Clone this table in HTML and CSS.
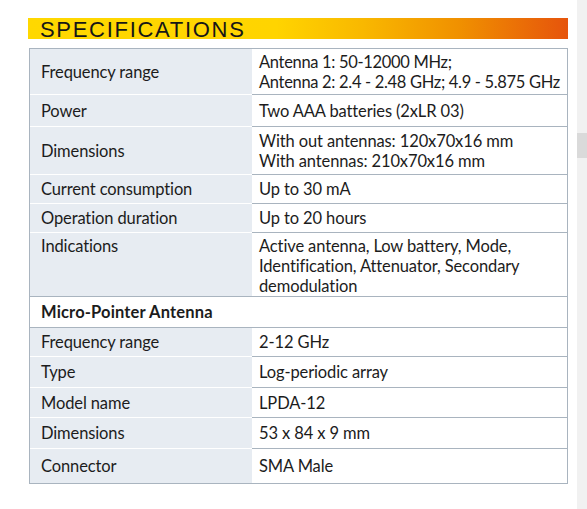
FILE: index.html
```html
<!DOCTYPE html>
<html lang="en">
<head>
<meta charset="utf-8">
<title>Specifications</title>
<link rel="stylesheet" href="styles.css">
</head>
<body>
<div class="page">
  <h1 class="banner">SPECIFICATIONS</h1>
  <div class="spec">
    <div class="row h46">
      <div class="key">Frequency range</div>
      <div class="val nowrap">Antenna 1: 50-12000 MHz;<br>Antenna 2: 2.4 - 2.48 GHz; 4.9 - 5.875 GHz</div>
    </div>
    <div class="row h32">
      <div class="key">Power</div>
      <div class="val">Two AAA batteries (2xLR 03)</div>
    </div>
    <div class="row h48">
      <div class="key">Dimensions</div>
      <div class="val">With out antennas: 120x70x16 mm<br>With antennas: 210x70x16 mm</div>
    </div>
    <div class="row h29">
      <div class="key">Current consumption</div>
      <div class="val">Up to 30 mA</div>
    </div>
    <div class="row h29">
      <div class="key">Operation duration</div>
      <div class="val">Up to 20 hours</div>
    </div>
    <div class="row h64 top before-head">
      <div class="key">Indications</div>
      <div class="val">Active antenna, Low battery, Mode, Identification, Attenuator, Secondary demodulation</div>
    </div>
    <div class="row h31 head">
      <div class="key">Micro-Pointer Antenna</div>
    </div>
    <div class="row h29">
      <div class="key">Frequency range</div>
      <div class="val">2-12 GHz</div>
    </div>
    <div class="row h31">
      <div class="key">Type</div>
      <div class="val">Log-periodic array</div>
    </div>
    <div class="row h30">
      <div class="key">Model name</div>
      <div class="val">LPDA-12</div>
    </div>
    <div class="row h31">
      <div class="key">Dimensions</div>
      <div class="val">53 x 84 x 9 mm</div>
    </div>
    <div class="row h34 last">
      <div class="key">Connector</div>
      <div class="val">SMA Male</div>
    </div>
  </div>
</div>
<div class="scrollbar"><div class="thumb"></div></div>
</body>
</html>
```
FILE: styles.css
```css
html, body {
  margin: 0;
  padding: 0;
  background: #ffffff;
}
body {
  font-family: Lato, "Open Sans", sans-serif;
  color: #1c1c1c;
}
.page {
  padding: 18px 0 0 28px;
  width: 540px;
}
.banner {
  margin: 0;
  height: 21px;
  background: linear-gradient(to right, #ffd800 0%, #ffd400 46%, #f9b800 62%, #f09000 80%, #e6540c 100%);
  font-family: "Liberation Sans", Arial, sans-serif;
  font-weight: normal;
  font-size: 22px;
  letter-spacing: 1.7px;
  line-height: 24px;
  padding-left: 12px;
  color: #161616;
  overflow: visible;
}
.spec {
  margin: 9px 0 0 1px;
  width: 537px;
  border: 1px solid #a9b4bf;
  font-size: 16.5px;
  line-height: 20px;
  letter-spacing: -0.12px;
}
.row {
  display: grid;
  grid-template-columns: 222px 1fr;
  box-sizing: border-box;
}
.key {
  background: #e7ecf2;
  border-bottom: 1px solid #ffffff;
  padding: 0 8px 0 11px;
  display: flex;
  align-items: center;
}
.val {
  border-bottom: 1px solid #a9b4bf;
  padding: 0 2px 0 7px;
  display: flex;
  align-items: center;
}
.val.nowrap {
  white-space: nowrap;
  letter-spacing: -0.32px;
}
.row.top .key,
.row.top .val {
  align-items: flex-start;
  padding-top: 3px;
}
.row.before-head .key {
  border-bottom-color: #a9b4bf;
}
.row.head .key {
  grid-column: 1 / 3;
  background: #ffffff;
  border-bottom-color: #a9b4bf;
  font-weight: bold;
  letter-spacing: 0.15px;
}
.row.last .key,
.row.last .val {
  border-bottom: none;
}
.h29 { height: 29px; }
.h30 { height: 30px; }
.h31 { height: 31px; }
.h32 { height: 32px; }
.h34 { height: 34px; }
.h46 { height: 46px; }
.h48 { height: 48px; }
.h64 { height: 64px; }
.scrollbar {
  position: fixed;
  top: 0;
  right: 0;
  width: 10px;
  height: 100%;
  background: #f1f1f1;
}
.thumb {
  position: absolute;
  top: 133px;
  left: 0;
  width: 10px;
  height: 25px;
  background: #dadada;
}
```
